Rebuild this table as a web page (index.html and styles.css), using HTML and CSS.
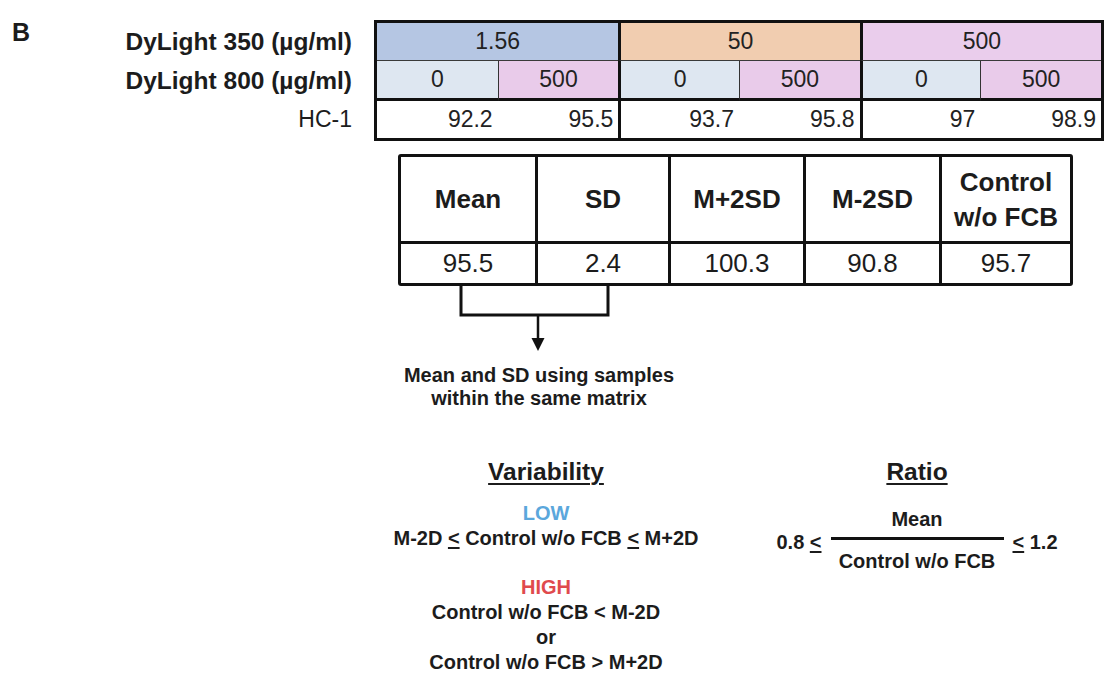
FILE: index.html
```html
<!DOCTYPE html>
<html lang="en">
<head>
<meta charset="utf-8">
<title>Panel B</title>
<link rel="stylesheet" href="styles.css">
</head>
<body>
<div class="page">
  <section class="top">
    <div class="letter">B</div>
    <div class="row-labels">
      <div class="row-label bold">DyLight 350 (µg/ml)</div>
      <div class="row-label bold">DyLight 800 (µg/ml)</div>
      <div class="row-label sample">HC-1</div>
    </div>
    <div class="conc">
      <div class="cell span2 c-blue">1.56</div>
      <div class="cell span2 c-peach gstart">50</div>
      <div class="cell span2 c-pink gstart">500</div>

      <div class="cell r2 c-zero">0</div>
      <div class="cell r2 c-five sub">500</div>
      <div class="cell r2 c-zero gstart">0</div>
      <div class="cell r2 c-five sub">500</div>
      <div class="cell r2 c-zero gstart">0</div>
      <div class="cell r2 c-five sub">500</div>

      <div class="cell r3">92.2</div>
      <div class="cell r3">95.5</div>
      <div class="cell r3 gstart">93.7</div>
      <div class="cell r3">95.8</div>
      <div class="cell r3 gstart">97</div>
      <div class="cell r3">98.9</div>
    </div>
  </section>

  <section class="stats-wrap">
    <div class="stats">
      <div class="s-head">Mean</div>
      <div class="s-head">SD</div>
      <div class="s-head">M+2SD</div>
      <div class="s-head">M-2SD</div>
      <div class="s-head two">Control<br>w/o FCB</div>
      <div class="s-val">95.5</div>
      <div class="s-val">2.4</div>
      <div class="s-val">100.3</div>
      <div class="s-val">90.8</div>
      <div class="s-val">95.7</div>
    </div>
    <svg class="bracket" width="300" height="67" viewBox="0 0 300 67">
      <path d="M63 0 V29 H210 V0" fill="none" stroke="#111" stroke-width="3"/>
      <path d="M140 29 V54" fill="none" stroke="#111" stroke-width="2.5"/>
      <polygon points="133.5,52 146.5,52 140,65" fill="#111"/>
    </svg>
    <p class="caption">Mean and SD using samples<br>within the same matrix</p>
  </section>

  <section class="criteria">
    <div class="variability">
      <h2 class="title">Variability</h2>
      <div class="level low">LOW</div>
      <div class="line">M-2D <span class="le">&lt;</span> Control w/o FCB <span class="le">&lt;</span> M+2D</div>
      <div class="level high">HIGH</div>
      <div class="line">Control w/o FCB &lt; M-2D</div>
      <div class="line">or</div>
      <div class="line">Control w/o FCB &gt; M+2D</div>
    </div>
    <div class="ratio">
      <h2 class="title">Ratio</h2>
      <div class="formula">
        <span class="bound">0.8 <span class="le">&lt;</span></span>
        <div class="fraction">
          <div class="num">Mean</div>
          <div class="bar"></div>
          <div class="den">Control w/o FCB</div>
        </div>
        <span class="bound"><span class="le">&lt;</span> 1.2</span>
      </div>
    </div>
  </section>
</div>
</body>
</html>
```

FILE: styles.css
```css
* { box-sizing: border-box; }

html, body {
  margin: 0;
  padding: 0;
  background: #ffffff;
}

body {
  font-family: "Liberation Sans", Arial, sans-serif;
  color: #1c1c1c;
}

.page {
  width: 1118px;
  height: 684px;
  padding-top: 20px;
  overflow: hidden;
}

/* ---------- top concentration table ---------- */
.top {
  display: flex;
  align-items: flex-start;
  padding-left: 12px;
}

.letter {
  width: 40px;
  font-size: 25px;
  font-weight: bold;
  line-height: 25px;
  padding-top: 0;
}

.row-labels {
  width: 300px;
  display: grid;
  grid-template-rows: 38px 40px 37px;
  padding-top: 3px;
}

.row-label {
  font-size: 24.5px;
  line-height: 1;
  display: flex;
  align-items: center;
  justify-content: flex-end;
}

.row-label.sample { font-size: 23px; }

.bold { font-weight: bold; }

.conc {
  margin-left: 22px;
  width: 730px;
  border: 3px solid #111;
  display: grid;
  grid-template-columns: repeat(6, 1fr);
  grid-template-rows: 38px 40px 37px;
}

.cell {
  font-size: 23px;
  display: flex;
  align-items: center;
  justify-content: center;
  color: #222;
}

.span2 {
  grid-column: span 2;
  border-bottom: 1px solid #3a3a3a;
}

.gstart { border-left: 3px solid #111; }

.r2 { border-bottom: 3px solid #111; }
.sub { border-left: 1.5px solid #333; }

.r3 {
  justify-content: flex-end;
  padding-right: 5px;
}

.c-blue  { background: #b5c6e3; }
.c-peach { background: #f1cdb0; }
.c-pink  { background: #eacdec; }
.c-zero  { background: #dee7f1; }
.c-five  { background: #e9cbea; }

/* ---------- stats table ---------- */
.stats-wrap {
  margin-left: 398px;
  margin-top: 13px;
  width: 675px;
}

.stats {
  border: 3px solid #111;
  border-radius: 3px;
  display: grid;
  grid-template-columns: 137px 133px 135px 136px 1fr;
  grid-template-rows: 87px 39px;
}

.s-head, .s-val {
  display: flex;
  align-items: center;
  justify-content: center;
  text-align: center;
  font-size: 26px;
  border-right: 3px solid #111;
}

.s-head:nth-child(5), .s-val:nth-child(10) { border-right: none; }

.s-head {
  font-weight: bold;
  border-bottom: 3px solid #111;
}

.two { line-height: 35px; padding-top: 2px; }

.bracket { display: block; }

.caption {
  margin: 11px 0 0;
  width: 282px;
  text-align: center;
  font-size: 20px;
  font-weight: bold;
  line-height: 23px;
}

/* ---------- criteria ---------- */
.criteria {
  display: flex;
  align-items: flex-start;
  gap: 31px;
  padding-left: 366px;
  margin-top: 48px;
}

.variability {
  width: 360px;
  text-align: center;
}

.ratio {
  width: 320px;
  text-align: center;
}

.title {
  margin: 0;
  font-size: 24.5px;
  line-height: 28px;
  font-weight: bold;
  text-decoration: underline;
  text-decoration-thickness: 2px;
  text-underline-offset: 3px;
}

.level {
  font-size: 20px;
  font-weight: bold;
  line-height: 25px;
}

.low { color: #5ba7dc; margin-top: 15px; }
.high { color: #e04a4d; margin-top: 24px; }

.line {
  font-size: 20px;
  font-weight: bold;
  line-height: 25px;
}

.le {
  text-decoration: underline;
  text-decoration-thickness: 2px;
  text-underline-offset: 2px;
}

.formula {
  margin-top: 21px;
  display: flex;
  align-items: center;
  justify-content: center;
  gap: 9px;
  font-size: 20px;
  font-weight: bold;
}

.bound { padding-top: 5px; }

.fraction {
  width: 173px;
  display: flex;
  flex-direction: column;
  align-items: center;
}

.num, .den { line-height: 24px; }

.bar {
  width: 100%;
  height: 3px;
  background: #111;
  margin: 6px 0 9px;
}
```
